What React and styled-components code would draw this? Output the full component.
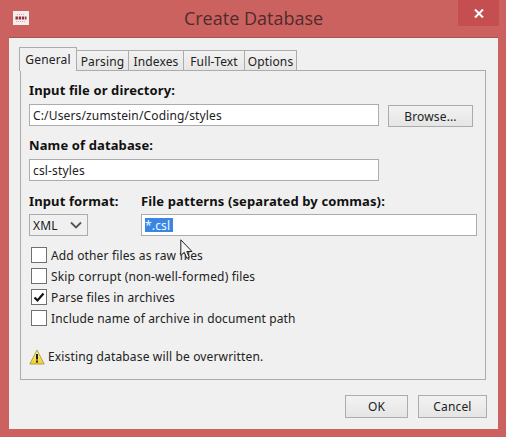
import React from 'react';
import styled, { createGlobalStyle } from 'styled-components';

const GlobalStyle = createGlobalStyle`
  html, body { margin: 0; padding: 0; }
  body { background: #cc625f; }
`;

const Frame = styled.div`
  position: relative;
  display: flex;
  flex-direction: column;
  width: 506px;
  height: 437px;
  box-sizing: border-box;
  padding: 0 8px 8px 9px;
  background: #cc625f;
  font-family: "Noto Sans", sans-serif;
  font-size: 12px;
  letter-spacing: 0.15px;
  color: #1a1a1a;
  overflow: hidden;
`;

const TitleBar = styled.div`
  display: flex;
  align-items: center;
  justify-content: center;
  height: 37px;
  flex: none;
  padding-bottom: 1px;
  box-sizing: border-box;
`;

const AppIcon = styled.div`
  position: absolute;
  left: 13px;
  top: 11px;
  width: 16px;
  height: 14px;
  background: #f6eeee;
  display: flex;
  align-items: center;
  justify-content: center;
`;

const Title = styled.div`
  font-family: "Open Sans", sans-serif;
  font-size: 18px;
  letter-spacing: 0;
  color: #4f2b2b;
`;

const CloseButton = styled.div`
  position: absolute;
  right: 7px;
  top: 0;
  width: 41px;
  height: 26px;
  background: #c44e50;
  display: flex;
  align-items: center;
  justify-content: center;
`;

const Client = styled.div`
  flex: 1;
  display: flex;
  flex-direction: column;
  background: #f0f0f0;
  border-top: 1px solid #a35654;
  padding: 11px 12px 0 11px;
`;

const TabRow = styled.div`
  display: flex;
  align-items: flex-end;
  height: 22px;
  flex: none;
  position: relative;
  z-index: 1;
  margin-bottom: -1px;
  margin-left: -1px;
`;

const Tab = styled.div`
  box-sizing: border-box;
  width: ${props => props.$w}px;
  height: ${props => (props.$active ? 24 : 21)}px;
  display: flex;
  align-items: center;
  justify-content: center;
  border: 1px solid #acacac;
  border-left-width: ${props => (props.$active || props.$first ? 1 : 0)}px;
  border-bottom: ${props => (props.$active ? 'none' : '1px solid #acacac')};
  background: ${props => (props.$active ? '#f0f0f0' : 'linear-gradient(#f2f2f2, #e6e6e6)')};
  color: #222;
  padding-top: ${props => (props.$active ? 0 : 1)}px;
`;

const Panel = styled.div`
  box-sizing: border-box;
  height: 310px;
  flex: none;
  border: 1px solid #acacac;
  padding: 11px 8px 0;
  display: flex;
  flex-direction: column;
`;

const Label = styled.div`
  font-weight: 700;
  font-size: 13px;
  letter-spacing: 0.12px;
  line-height: 16px;
  color: #111;
  margin-top: ${props => props.$top || 0}px;
`;

const Row = styled.div`
  display: flex;
  gap: ${props => props.$gap || 0}px;
  align-items: flex-start;
  margin-top: ${props => props.$top || 0}px;
`;

const TextField = styled.div`
  box-sizing: border-box;
  width: ${props => props.$w}px;
  height: 22px;
  flex: none;
  background: #fff;
  border: 1px solid #acacac;
  display: flex;
  align-items: center;
  padding-left: 3px;
  color: #222;
`;

const Selected = styled.span`
  display: flex;
  align-items: center;
  height: 14px;
  width: 28px;
  background: #3a86e4;
  color: #f4f8ff;
`;

const Column = styled.div`
  display: flex;
  flex-direction: column;
  gap: 5px;
  width: ${props => props.$w}px;
  flex: none;
`;

const Select = styled.div`
  box-sizing: border-box;
  width: 59px;
  height: 22px;
  border: 1px solid #acacac;
  background: #f0f0f0;
  display: flex;
  align-items: center;
  justify-content: space-between;
  padding: 0 5px 0 3px;
`;

const PushButton = styled.div`
  box-sizing: border-box;
  width: ${props => props.$w}px;
  height: 23px;
  flex: none;
  border: 1px solid #acacac;
  background: linear-gradient(#f2f2f2, #e5e5e5);
  display: flex;
  align-items: center;
  justify-content: center;
  color: #222;
`;

const BrowseButton = styled(PushButton)`
  height: 22px;
  margin-top: 1px;
`;

const Options = styled.div`
  display: flex;
  flex-direction: column;
  gap: 5px;
  margin-top: 11px;
  padding-left: 2px;
`;

const Option = styled.div`
  display: flex;
  align-items: center;
  gap: 4px;
  height: 16px;
  color: #222;
`;

const Box = styled.div`
  box-sizing: border-box;
  width: 16px;
  height: 16px;
  border: 1px solid #707070;
  background: #fff;
  display: flex;
  align-items: center;
  justify-content: center;
`;

const Warning = styled.div`
  display: flex;
  align-items: center;
  gap: 3px;
  margin-top: 22px;
  color: #222;
`;

const Footer = styled.div`
  display: flex;
  justify-content: flex-end;
  gap: 10px;
  margin-top: 15px;
  margin-right: -1px;
`;

const Cursor = styled.svg`
  position: absolute;
  left: 180px;
  top: 239px;
`;

const CheckOption = ({ checked, children }) => (
  <Option>
    <Box>
      {checked && (
        <svg width="12" height="12" viewBox="0 0 12 12">
          <path d="M1.5 6.5 L4.5 9.5 L10.5 2.5" fill="none" stroke="#111" strokeWidth="2.2" />
        </svg>
      )}
    </Box>
    {children}
  </Option>
);

const App = () => (
  <>
    <GlobalStyle />
    <Frame>
      <TitleBar>
        <Title>Create Database</Title>
      </TitleBar>
      <AppIcon>
        <svg width="14" height="10" viewBox="0 0 14 10">
          <path d="M3 1.5h8M2 8.5h10" stroke="#dba6a8" strokeWidth="1.2" strokeDasharray="1 1" />
          <path d="M1.5 5h11" stroke="#8f2f3a" strokeWidth="3" strokeDasharray="2.4 0.8" />
        </svg>
      </AppIcon>
      <CloseButton>
        <svg width="10" height="9" viewBox="0 0 10 9">
          <path d="M1 0.5 L9 8.5 M9 0.5 L1 8.5" stroke="#fff" strokeWidth="2" />
        </svg>
      </CloseButton>
      <Client>
        <TabRow>
          <Tab $active $first $w={58}>General</Tab>
          <Tab $w={52}>Parsing</Tab>
          <Tab $w={55}>Indexes</Tab>
          <Tab $w={61}>Full-Text</Tab>
          <Tab $w={52}>Options</Tab>
        </TabRow>
        <Panel>
          <Label>Input file or directory:</Label>
          <Row $gap={9} $top={6}>
            <TextField $w={350}>C:/Users/zumstein/Coding/styles</TextField>
            <BrowseButton $w={85}>Browse...</BrowseButton>
          </Row>
          <Label $top={10}>Name of database:</Label>
          <Row $top={6}>
            <TextField $w={350}>csl-styles</TextField>
          </Row>
          <Row $top={12}>
            <Column $w={112}>
              <Label>Input format:</Label>
              <Select>
                XML
                <svg width="12" height="8" viewBox="0 0 12 8">
                  <path d="M1 1.5 L6 6.5 L11 1.5" fill="none" stroke="#555" strokeWidth="1.8" />
                </svg>
              </Select>
            </Column>
            <Column $w={336}>
              <Label>File patterns (separated by commas):</Label>
              <TextField $w={336}><Selected>*.csl</Selected></TextField>
            </Column>
          </Row>
          <Options>
            <CheckOption>Add other files as raw files</CheckOption>
            <CheckOption>Skip corrupt (non-well-formed) files</CheckOption>
            <CheckOption checked>Parse files in archives</CheckOption>
            <CheckOption>Include name of archive in document path</CheckOption>
          </Options>
          <Warning>
            <svg width="16" height="16" viewBox="0 0 16 16">
              <defs>
                <linearGradient id="warnFill" x1="0" y1="0" x2="0" y2="1">
                  <stop offset="0" stopColor="#fbf3a0" />
                  <stop offset="1" stopColor="#f0d020" />
                </linearGradient>
              </defs>
              <path d="M8 1 L15.2 15 H0.8 Z" fill="url(#warnFill)" stroke="#b0a050" strokeWidth="1" strokeLinejoin="round" />
              <path d="M8 5 V10.5" stroke="#222" strokeWidth="2" />
              <path d="M8 11.6 V13.6" stroke="#222" strokeWidth="2" />
            </svg>
            Existing database will be overwritten.
          </Warning>
        </Panel>
        <Footer>
          <PushButton $w={63}>OK</PushButton>
          <PushButton $w={69}>Cancel</PushButton>
        </Footer>
      </Client>
      <Cursor width="14" height="21" viewBox="0 0 14 21">
        <path d="M0.8 0.8 V16.5 L4.3 13.3 L6.8 19.3 L9.3 18.3 L6.8 12.5 H12 Z" fill="#f4f4f4" stroke="#222" strokeWidth="1" />
      </Cursor>
    </Frame>
  </>
);

export default App;
